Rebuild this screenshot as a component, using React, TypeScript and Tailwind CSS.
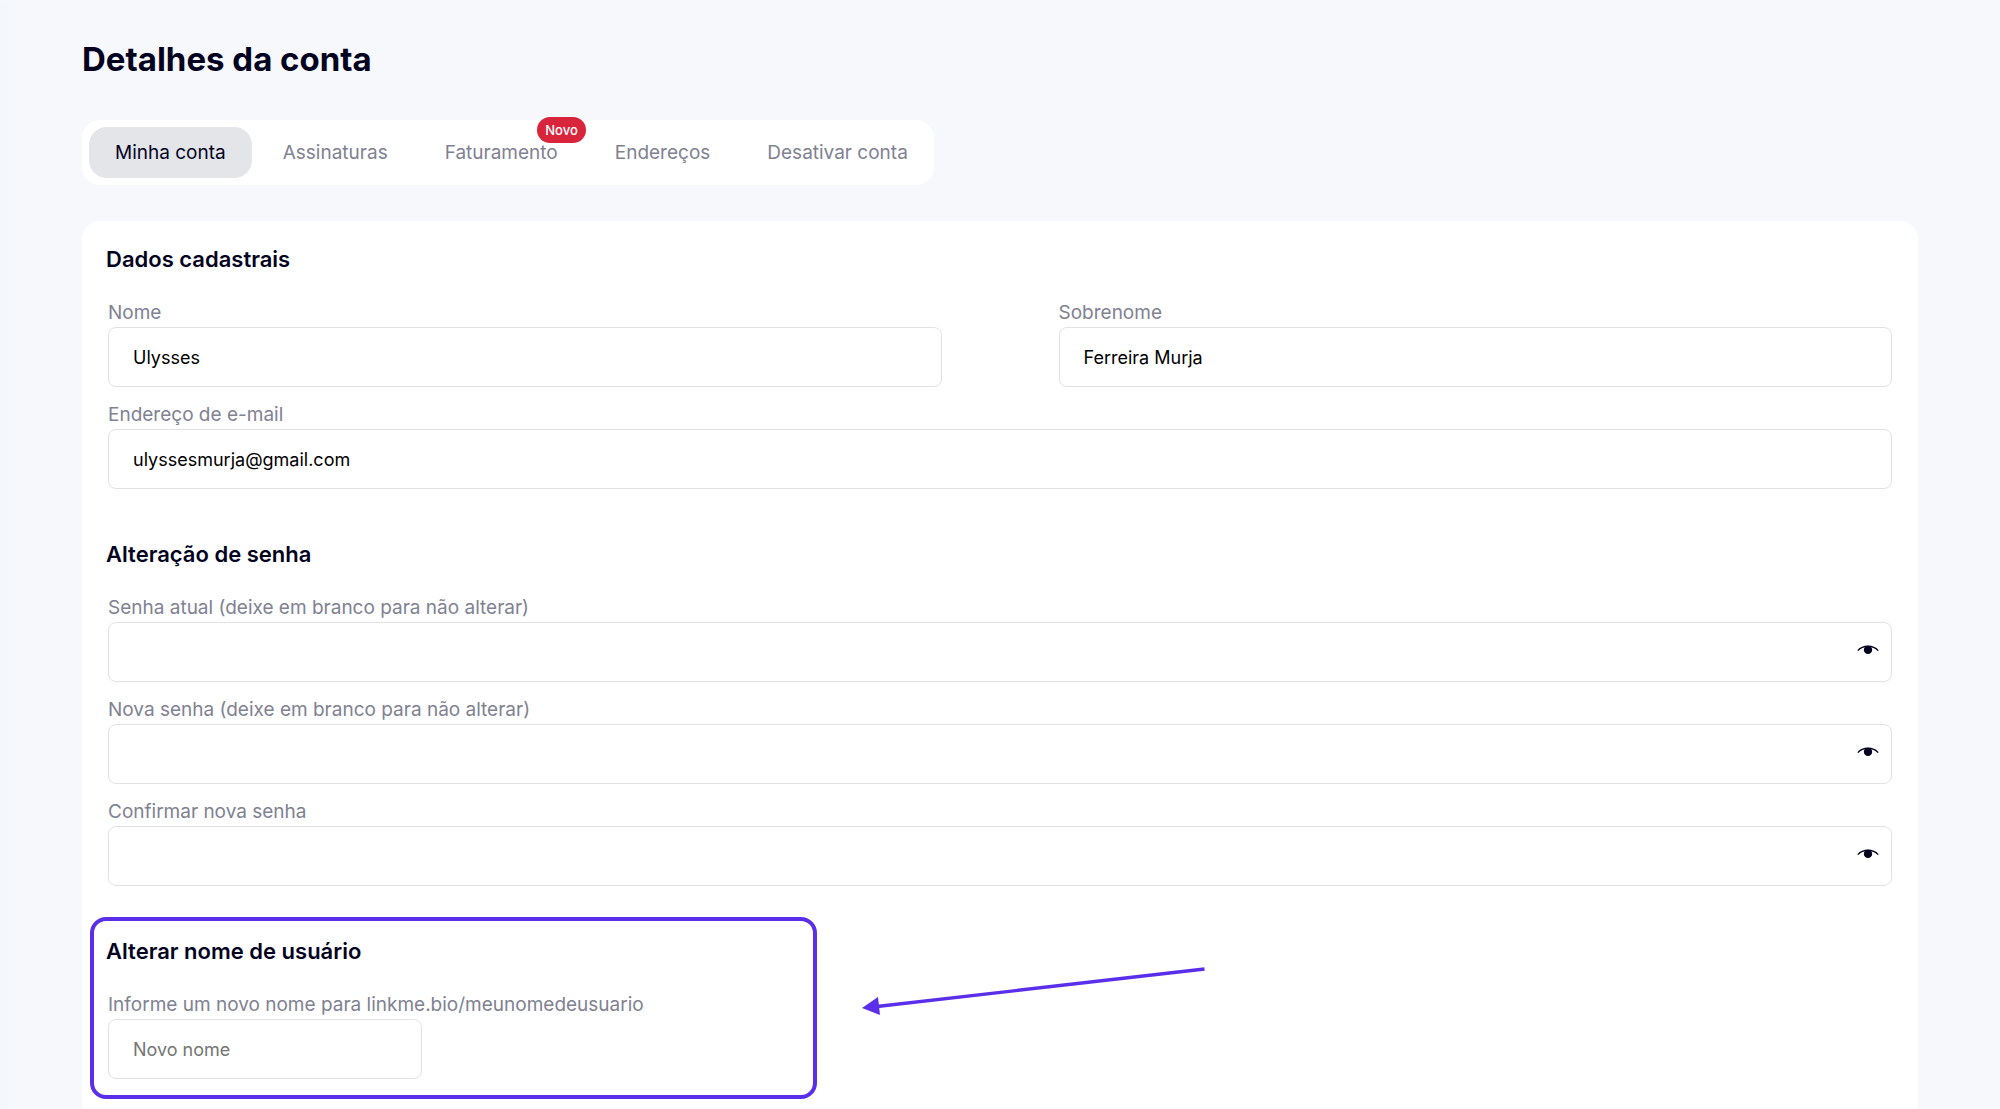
import { useState } from "react"
import type { ReactNode } from "react"
import clsx from "clsx"

const tabs = [
  { id: "conta", label: "Minha conta" },
  { id: "assinaturas", label: "Assinaturas" },
  { id: "faturamento", label: "Faturamento", badge: "Novo" },
  { id: "enderecos", label: "Endereços" },
  { id: "desativar", label: "Desativar conta" },
]

const inputClass =
  "block h-[60px] w-full rounded-lg border border-[#e2e2e4] bg-white px-6 text-[18px] text-black placeholder:text-[#757575] focus:outline-none"

const labelClass = "block text-[19px] leading-7 text-[#808191]"

const EyeIcon = () => (
  <svg width="22" height="10" viewBox="0 0 22 10" aria-hidden="true">
    <path d="M.8 5.600C3.400 2.700 6.800 1.200 11 1.200S18.600 2.700 21.200 5.600" fill="none" stroke="currentColor" strokeWidth="1.400" />
    <circle cx="11" cy="4.900" r="4.200" fill="currentColor" />
  </svg>
)

const SectionTitle = ({ children }: { children: ReactNode }) => (
  <h2 className="-ml-0.5 mb-6 text-[22px] leading-8 font-semibold">{children}</h2>
)

interface FieldProps {
  id: string
  label: string
  type?: string
  defaultValue?: string
}

const Field = ({ id, label, type = "text", defaultValue }: FieldProps) => {
  const [visible, setVisible] = useState(false)
  const isPassword = type === "password"

  return (
    <div>
      <label htmlFor={id} className={labelClass}>
        {label}
      </label>
      <div className="relative">
        <input
          id={id}
          type={isPassword && visible ? "text" : type}
          defaultValue={defaultValue}
          className={inputClass}
        />
        {isPassword && (
          <button
            type="button"
            aria-label="Mostrar senha"
            className="absolute top-[19px] right-[13px] flex h-[18px] items-center"
            onClick={() => setVisible((prev) => !prev)}
          >
            <EyeIcon />
          </button>
        )}
      </div>
    </div>
  )
}

export default function App() {
  const [activeTab, setActiveTab] = useState("conta")

  return (
    <div className="flex min-h-screen bg-[#f6f8fc] font-['Inter',sans-serif] text-[#03031f]">
      <div className="w-2 shrink-0 rounded-tr-lg bg-[#f4f7fb]" />
      <main className="flex flex-1 flex-col pt-[39px] pr-[82px] pl-[74px]">
        <h1 className="text-[33px] leading-10 font-bold">Detalhes da conta</h1>

        <nav className="mt-[41px] flex w-fit gap-[5px] rounded-[18px] bg-white py-[7px] pl-[7px]">
          {tabs.map((tab) => (
            <button
              key={tab.id}
              type="button"
              onClick={() => setActiveTab(tab.id)}
              className={clsx(
                "relative h-[51px] rounded-[18px] px-[26px] pt-0.5 text-[19px]",
                tab.id === activeTab ? "bg-[#e4e5e9]" : "text-[#808191]"
              )}
            >
              {tab.label}
              {tab.badge && (
                <span className="absolute -top-2.5 -right-0.5 rounded-full bg-[#d9253b] px-2 text-[13px] leading-[26px] font-medium text-white">
                  {tab.badge}
                </span>
              )}
            </button>
          ))}
        </nav>

        <form className="mt-9 flex-1 rounded-t-[18px] bg-white px-[26px] pt-[22px] pb-[11px]">
          <section>
            <SectionTitle>Dados cadastrais</SectionTitle>
            <div className="grid grid-cols-2 gap-x-[117px] gap-y-3.5">
              <Field id="nome" label="Nome" defaultValue="Ulysses" />
              <Field id="sobrenome" label="Sobrenome" defaultValue="Ferreira Murja" />
              <div className="col-span-2">
                <Field id="email" label="Endereço de e-mail" type="email" defaultValue="ulyssesmurja@gmail.com" />
              </div>
            </div>
          </section>

          <section className="mt-[49px]">
            <SectionTitle>Alteração de senha</SectionTitle>
            <div className="flex flex-col gap-3.5">
              <Field id="senha-atual" label="Senha atual (deixe em branco para não alterar)" type="password" />
              <Field id="nova-senha" label="Nova senha (deixe em branco para não alterar)" type="password" />
              <Field id="confirmar-senha" label="Confirmar nova senha" type="password" />
            </div>
          </section>

          <div className="-ml-[18px] mt-[31px] flex items-start gap-11">
            <section className="w-[727px] rounded-2xl border-4 border-[#5b2eea] px-3.5 pt-3.5 pb-4">
              <SectionTitle>Alterar nome de usuário</SectionTitle>
              <label htmlFor="novo-nome" className={labelClass}>
                Informe um novo nome para linkme.bio/meunomedeusuario
              </label>
              <div className="w-[314px]">
                <input id="novo-nome" type="text" placeholder="Novo nome" className={inputClass} />
              </div>
            </section>
            <svg className="mt-12 text-[#5b2eea]" width="345" height="52" viewBox="0 0 345 52" aria-hidden="true">
              <path d="M16 41.500 343.500 4" stroke="currentColor" strokeWidth="3.400" />
              <path d="M1 43 17 32 19 50Z" fill="currentColor" />
            </svg>
          </div>
        </form>
      </main>
    </div>
  )
}
